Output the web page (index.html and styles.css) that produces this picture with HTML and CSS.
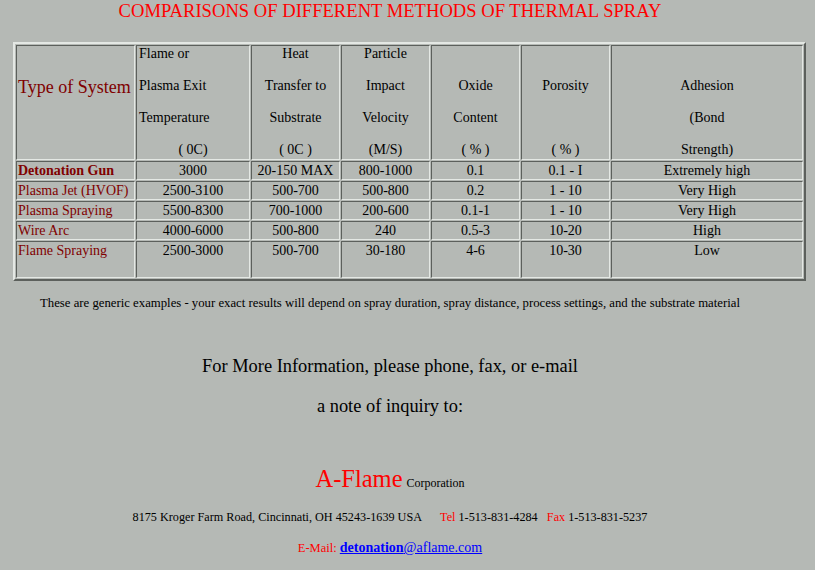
FILE: index.html
```html
<!DOCTYPE html>
<html>
<head>
<meta charset="utf-8">
<title>Comparisons of Different Methods of Thermal Spray</title>
<link rel="stylesheet" href="styles.css">
</head>
<body>
<div class="center-col">
  <h1 class="title">COMPARISONS OF DIFFERENT METHODS OF THERMAL SPRAY</h1>
</div>
<table class="spray">
  <colgroup>
    <col class="c1"><col class="c2"><col class="c3"><col class="c4"><col class="c5"><col class="c6"><col class="c7">
  </colgroup>
  <tr class="head">
    <th class="sys"><span class="sys-label">Type of System</span></th>
    <th>
      <div class="ln left">Flame or</div>
      <div class="ln left">Plasma Exit</div>
      <div class="ln left">Temperature</div>
      <div class="ln">( 0C)</div>
    </th>
    <th>
      <div class="ln">Heat</div>
      <div class="ln">Transfer to</div>
      <div class="ln">Substrate</div>
      <div class="ln">( 0C )</div>
    </th>
    <th>
      <div class="ln">Particle</div>
      <div class="ln">Impact</div>
      <div class="ln">Velocity</div>
      <div class="ln">(M/S)</div>
    </th>
    <th>
      <div class="ln">&nbsp;</div>
      <div class="ln">Oxide</div>
      <div class="ln">Content</div>
      <div class="ln">( % )</div>
    </th>
    <th>
      <div class="ln">&nbsp;</div>
      <div class="ln">Porosity</div>
      <div class="ln">&nbsp;</div>
      <div class="ln">( % )</div>
    </th>
    <th>
      <div class="ln">&nbsp;</div>
      <div class="ln">Adhesion</div>
      <div class="ln">(Bond</div>
      <div class="ln">Strength)</div>
    </th>
  </tr>
  <tr class="row">
    <td class="name bold">Detonation Gun</td><td>3000</td><td>20-150 MAX</td><td>800-1000</td><td>0.1</td><td>0.1 - I</td><td>Extremely high</td>
  </tr>
  <tr class="row">
    <td class="name">Plasma Jet (HVOF)</td><td>2500-3100</td><td>500-700</td><td>500-800</td><td>0.2</td><td>1 - 10</td><td>Very High</td>
  </tr>
  <tr class="row">
    <td class="name">Plasma Spraying</td><td>5500-8300</td><td>700-1000</td><td>200-600</td><td>0.1-1</td><td>1 - 10</td><td>Very High</td>
  </tr>
  <tr class="row">
    <td class="name">Wire Arc</td><td>4000-6000</td><td>500-800</td><td>240</td><td>0.5-3</td><td>10-20</td><td>High</td>
  </tr>
  <tr class="row last">
    <td class="name">Flame Spraying</td><td>2500-3000</td><td>500-700</td><td>30-180</td><td>4-6</td><td>10-30</td><td>Low</td>
  </tr>
</table>
<div class="center-col">
  <p class="note">These are generic examples - your exact results will depend on spray duration, spray distance, process settings, and the substrate material</p>
  <p class="more">For More Information, please phone, fax, or e-mail</p>
  <p class="inquiry">a note of inquiry to:</p>
  <p class="company"><span class="brand">A-Flame</span> <span class="corp">Corporation</span></p>
  <p class="address">8175 Kroger Farm Road, Cincinnati, OH 45243-1639 USA&nbsp;&nbsp;&nbsp;&nbsp;&nbsp; <span class="red">Tel</span> 1-513-831-4284&nbsp;&nbsp; <span class="red">Fax</span> 1-513-831-5237</p>
  <p class="email"><span class="red">E-Mail:</span> <a href="#" class="mail"><b>detonation</b>@aflame.com</a></p>
</div>
</body>
</html>
```
FILE: styles.css
```css
html, body {
  margin: 0;
  padding: 0;
}
body {
  background: #b5b9b5;
  font-family: "Liberation Serif", "Times New Roman", serif;
  color: #000;
  width: 815px;
  height: 570px;
  overflow: hidden;
}
.center-col {
  width: 780px;
  text-align: center;
}
.title {
  margin: 0;
  font-size: 18.6px;
  line-height: 22px;
  font-weight: normal;
  color: #ff0000;
}
.spray {
  margin: 20px 0 0 13px;
  width: 793px;
  table-layout: fixed;
  border-collapse: separate;
  border-spacing: 1px;
  border-style: solid;
  border-width: 2px;
  border-color: #e4e8e4 #5c605c #5c605c #e4e8e4;
  font-size: 14px;
}
.c1 { width: 119px; }
.c2 { width: 114px; }
.c3 { width: 89px; }
.c4 { width: 89px; }
.c5 { width: 89px; }
.c6 { width: 89px; }
.c7 { width: auto; }
.spray th, .spray td {
  border-style: solid;
  border-width: 1px;
  border-color: #5c605c #e4e8e4 #e4e8e4 #5c605c;
  box-sizing: border-box;
  padding: 0 2px;
  vertical-align: top;
  font-weight: normal;
  text-align: center;
  overflow: hidden;
  white-space: nowrap;
}
.head th {
  height: 114px;
}
.ln {
  line-height: 18px;
  margin-bottom: 14px;
}
.ln:first-child {
  margin-top: -1px;
}
.ln:last-child {
  margin-bottom: 0;
}
.ln.left {
  text-align: left;
}
.spray th.sys {
  text-align: left;
  padding-top: 30px;
  padding-left: 1px;
}
.sys-label {
  font-size: 18px;
  line-height: 22px;
  color: #800000;
}
.row td {
  height: 19px;
  line-height: 17px;
}
.row.last td {
  height: 37px;
}
.spray td.name {
  text-align: left;
  color: #800000;
  padding-left: 1px;
}
.spray td.bold {
  font-weight: bold;
}
.note {
  margin: 14px 0 0 0;
  font-size: 12.75px;
  line-height: 16px;
}
.more {
  margin: 43px 0 0 0;
  font-size: 18.4px;
  line-height: 24px;
}
.inquiry {
  margin: 16px 0 0 0;
  font-size: 18.4px;
  line-height: 24px;
}
.company {
  margin: 46px 0 0 0;
  line-height: 30px;
}
.brand {
  font-size: 24.5px;
  color: #ff0000;
}
.corp {
  font-size: 12px;
}
.address {
  margin: 11px 0 0 0;
  font-size: 12.2px;
  line-height: 16px;
}
.red {
  color: #ff0000;
}
.email {
  margin: 15px 0 0 0;
  font-size: 12.5px;
  line-height: 16px;
}
.mail {
  color: #0000ff;
  font-size: 14px;
  text-decoration: underline;
}
.mail b {
  font-weight: bold;
}
```
